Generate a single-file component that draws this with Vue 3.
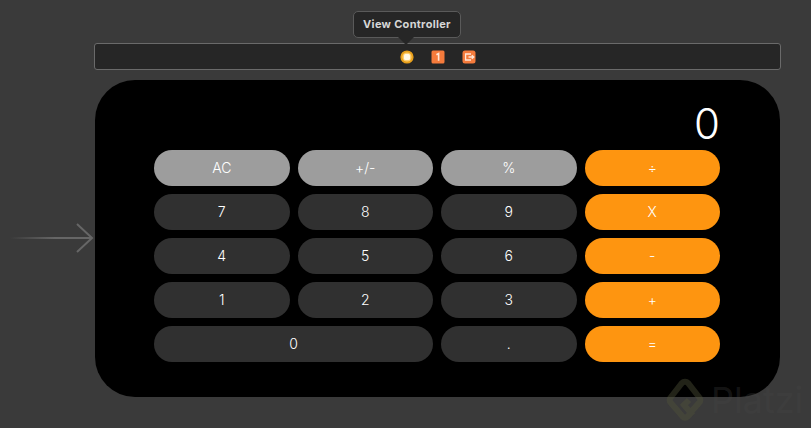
<script setup>
const keys = [
  { label: "AC", kind: "light" },
  { label: "+/-", kind: "light" },
  { label: "%", kind: "light" },
  { label: "÷", kind: "op" },
  { label: "7" },
  { label: "8" },
  { label: "9" },
  { label: "X", kind: "op" },
  { label: "4" },
  { label: "5" },
  { label: "6" },
  { label: "-", kind: "op" },
  { label: "1" },
  { label: "2" },
  { label: "3" },
  { label: "+", kind: "op" },
  { label: "0", wide: true },
  { label: "." },
  { label: "=", kind: "op" },
];
</script>

<template>
  <div class="canvas">
    <!-- scene dock -->
    <div class="dock">
      <span class="dock-icon">
        <svg viewBox="0 0 14 14" width="14" height="14">
          <circle cx="7" cy="7" r="6.6" fill="#e8a01c" />
          <circle cx="7" cy="7" r="4.6" fill="#ffcf70" />
          <rect x="4" y="4" width="6" height="6" rx="1.5" fill="#fff8e6" />
        </svg>
      </span>
      <span class="dock-icon">
        <svg viewBox="0 0 14 14" width="14" height="14">
          <rect x="0.5" y="0.5" width="13" height="13" rx="1.5" fill="#f57b3c" />
          <path d="M5.4 4.8 7.6 3.6V10.8" fill="none" stroke="#ffe6d6" stroke-width="1.6" />
        </svg>
      </span>
      <span class="dock-icon">
        <svg viewBox="0 0 14 14" width="14" height="14">
          <rect x="0.5" y="0.5" width="13" height="13" rx="2.5" fill="#f57b3c" />
          <path d="M9 4H3.6V10H9M6.5 7H11.5M9.8 5.2l2 1.8-2 1.8" fill="none" stroke="#ffe6d6" stroke-width="1.3" />
        </svg>
      </span>
    </div>

    <!-- calculator scene -->
    <div class="device">
      <div class="display">0</div>
      <div class="keys">
        <button
          v-for="key in keys"
          :key="key.label"
          type="button"
          class="key"
          :class="[key.kind ? 'key--' + key.kind : '', { 'key--wide': key.wide }]"
        >
          {{ key.label }}
        </button>
      </div>
    </div>

    <!-- tooltip over the dock -->
    <div class="tooltip">View Controller</div>

    <!-- storyboard entry arrow -->
    <svg class="entry" width="86" height="30" viewBox="0 0 86 30">
      <defs>
        <linearGradient id="entry-fade" x1="0" x2="1" y1="0" y2="0">
          <stop offset="0" stop-color="#666" stop-opacity="0" />
          <stop offset="0.55" stop-color="#666" />
          <stop offset="1" stop-color="#666" />
        </linearGradient>
      </defs>
      <rect x="0" y="14" width="82" height="2" fill="url(#entry-fade)" />
      <path d="M67 1 82 15 67 29" fill="none" stroke="#666" stroke-width="2" />
    </svg>

    <!-- watermark -->
    <div class="watermark">
      <svg width="38" height="46" viewBox="0 0 38 46">
        <path
          d="M24 36 33 26a4 4 0 0 0 0-6L22 6a4 4 0 0 0-6 0L5 20a4 4 0 0 0 0 6l12 14a3 3 0 0 0 4 0l4-4-7-8 5-5"
          fill="none"
          stroke="#50543a"
          stroke-opacity="0.42"
          stroke-width="6"
        />
      </svg>
      <span>Platzi</span>
    </div>
  </div>
</template>

<style scoped>
.canvas {
  position: relative;
  width: 811px;
  height: 428px;
  overflow: hidden;
  padding: 43px 30px 0 94px;
  box-sizing: border-box;
  background: #3a3a3a;
  font-family: Inter, "Liberation Sans", sans-serif;
}

.dock {
  display: flex;
  justify-content: center;
  align-items: center;
  gap: 17px;
  height: 27px;
  box-sizing: border-box;
  border: 1px solid #6a6a6a;
  border-radius: 3px;
  background: #262626;
}

.dock-icon {
  display: flex;
}

.device {
  margin: 10px 1px 0;
  height: 317px;
  box-sizing: border-box;
  padding: 20px 60px 0 59px;
  border-radius: 40px;
  background: #000;
}

.display {
  height: 50px;
  text-align: right;
  font-size: 42px;
  line-height: 48px;
  font-weight: 300;
  color: #fff;
}

.keys {
  display: grid;
  grid-template-columns: repeat(4, 1fr);
  grid-auto-rows: 35.5px;
  gap: 8.5px 8px;
}

.key {
  border: none;
  border-radius: 18px;
  padding: 0 0 1px;
  font-family: inherit;
  font-size: 14px;
  font-weight: 300;
  color: #fff;
  background: #303030;
}

.key--light {
  background: #9d9d9d;
}

.key--op {
  background: #fe9510;
}

.key--wide {
  grid-column: span 2;
}

.tooltip {
  position: absolute;
  left: 353px;
  top: 11px;
  width: 108px;
  height: 27px;
  box-sizing: border-box;
  border: 1px solid #5a5a5a;
  border-radius: 5px;
  background: #262626;
  text-align: center;
  font-size: 11px;
  font-weight: 700;
  letter-spacing: 0.3px;
  line-height: 24px;
  color: #d6d6d6;
}

.tooltip::after {
  content: "";
  position: absolute;
  left: 44px;
  top: 25px;
  border: 8px solid transparent;
  border-top: 8px solid #262626;
  border-bottom: none;
}

.entry {
  position: absolute;
  left: 10px;
  top: 223px;
}

.watermark {
  position: absolute;
  left: 666px;
  top: 377px;
  display: flex;
  align-items: center;
  gap: 7px;
  font-size: 36px;
  color: rgba(70, 70, 70, 0.3);
}
</style>

<style>
html,
body {
  background: #3a3a3a;
}
</style>
